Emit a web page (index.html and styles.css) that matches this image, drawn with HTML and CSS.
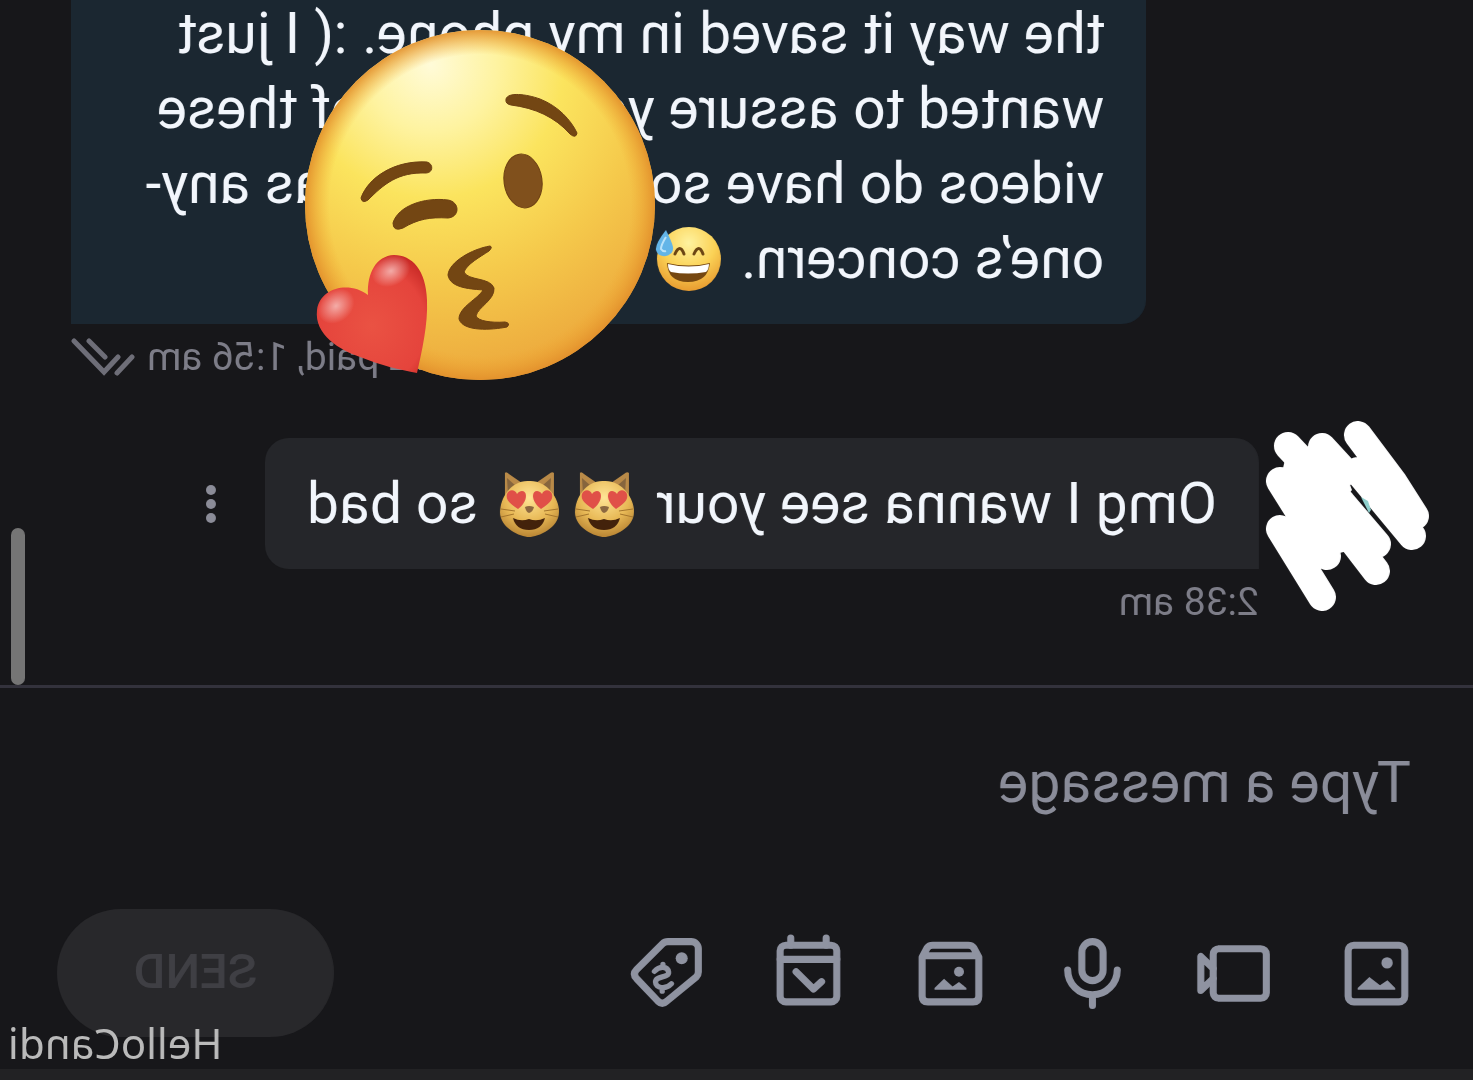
FILE: index.html
```html
<!DOCTYPE html>
<html lang="en">

<head>
  <meta charset="UTF-8" />
  <meta name="viewport" content="width=device-width, initial-scale=1.0" />
  <title>Messages</title>
  <link rel="stylesheet" href="styles.css">
</head>

<body>
  <!-- the whole chat is flipped left to right, see .mirror -->
  <div class="chat mirror">
    <main class="messages">
      <div class="message out">
        <div class="bubble">the way it saved in my phone. :( I just<br>
          wanted to assure you that all of these<br>
          videos do have sound, if that was any-<br>
          one’s concern. <svg class="emoji" viewBox="0 0 75 68" role="img" aria-label="sweat smile">
            <defs>
              <radialGradient id="smile" cx="50%" cy="25%" r="75%">
                <stop offset="0" stop-color="#fff3a0" />
                <stop offset=".55" stop-color="#fbd256" />
                <stop offset="1" stop-color="#e89c30" />
              </radialGradient>
            </defs>
            <circle cx="38" cy="34" r="32" fill="url(#smile)" />
            <path d="M24 29q4-11 9 0M43 29q4-11 9 0" fill="none" stroke="#6b4413" stroke-width="3" stroke-linecap="round" />
            <path d="M17 38q21 5 43 0q-1 19-21 19t-22-19z" fill="#754711" />
            <path d="M18 39q20 5 41 0q0 6-3 8q-17 3-35 0q-3-3-3-8z" fill="#fff" />
            <path d="M61 5q11 14 10 20q-2 7-10 6q-8-2-7-9q1-5 7-17z" fill="#63b5e8" />
            <path d="M61 12q5 8 5 12q-2 3-5 2" fill="none" stroke="#bce4fa" stroke-width="2" />
          </svg></div>
        <div class="meta">
          <span>$12 paid, 1:56 am</span>
          <svg class="checks" viewBox="0 0 64 40">
            <path d="M61 4L31 35L17 20M46 4L30 20M18 36L3 20" />
          </svg>
        </div>
      </div>

      <div class="message in">
        <div class="row">
          <div class="avatar">
            <svg viewBox="0 0 163 190">
              <g transform="matrix(-1 0 0 1 163 0)">
                <path class="scribble" d="M92 14L128 62L149 95M92 50L146 115M56 26L79 51M22 25L76 82L111 123M14 60L61 135M60 85L110 150M14 108L56 176" />
                <path d="M22 26H56L79 50L86 69L76 82L111 123L61 135L14 108L32 85L14 60zM92 50L110 35L149 95L146 115z" fill="#fff" />
                <path d="M95 76l7 4 3 9-2 3z" fill="#8fd0cd" />
              </g>
            </svg>
          </div>
          <div class="bubble">Omg I wanna see your <svg class="emoji" viewBox="0 0 75 68" role="img" aria-label="heart eyes cat">
              <defs>
                <radialGradient id="fur" cx="50%" cy="30%" r="70%">
                  <stop offset="0" stop-color="#ffe596" />
                  <stop offset=".6" stop-color="#e8b956" />
                  <stop offset="1" stop-color="#b98534" />
                </radialGradient>
                <g id="cat">
                  <path d="M13 30L13 3Q15 1 18 4L31 13Q38 10 45 13L58 4Q61 1 62 3L62 30z" fill="#b98a48" />
                  <path d="M16 8l9 8-8 8zM60 8l-9 8 8 8z" fill="#86653d" />
                  <path d="M38 11C56 10 67 28 67 42C67 58 47 67 38 67C29 67 8 58 8 42C8 28 20 10 38 11z" fill="url(#fur)" />
                  <path d="M9 39l14 2M9 47l13-3M66 39l-14 2M66 47l-13-3" stroke="#a5762d" stroke-width="1" />
                  <path d="M26 39C15 32 14 28 15 24C17 19 23 19 25 24C29 19 34 21 34 26C34 31 30 36 26 39zM49 39C60 32 61 28 60 24C58 19 52 19 50 24C46 19 41 21 41 26C41 31 45 36 49 39z" fill="#e05048" />
                  <path d="M33 37q5-2 9 0q-1 5-4 6q-4-1-5-6z" fill="#8c6840" />
                  <path d="M22 48q8 4 16 1q8 3 16-1q-3 12-16 12t-16-12z" fill="#43220b" />
                </g>
              </defs>
              <use href="#cat" />
            </svg><svg class="emoji" viewBox="0 0 75 68" role="img" aria-label="heart eyes cat">
              <use href="#cat" />
            </svg> so bad</div>
          <button class="more" type="button" aria-label="More">
            <svg viewBox="0 0 12 40">
              <circle cx="6" cy="6" r="5" />
              <circle cx="6" cy="20" r="5" />
              <circle cx="6" cy="34" r="5" />
            </svg>
          </button>
        </div>
        <div class="meta">2:38 am</div>
      </div>
      <div class="scrollbar"></div>
    </main>

    <form class="composer">
      <input class="text" type="text" placeholder="Type a message" aria-label="Type a message">
      <div class="toolbar">
        <div class="tools">
          <button type="button" aria-label="Photo">
            <svg class="icon" viewBox="0 0 24 24">
              <rect x="4" y="4" width="16" height="16" rx="1.6" />
              <g class="solid">
                <circle cx="9" cy="9" r="1.6" />
                <path d="M6.7 16.1L8.9 13.9L11 15.3L14 13L17.3 16.1V16.6H6.7z" />
              </g>
            </svg>
          </button>
          <button type="button" aria-label="Video">
            <svg class="icon" viewBox="0 0 24 24">
              <rect x="3" y="5" width="15" height="14" rx="1.6" />
              <path d="M18 10.6L21.5 7.2V16.8L18 13.4" />
            </svg>
          </button>
          <button type="button" aria-label="Voice">
            <svg class="icon" viewBox="0 0 24 24">
              <rect x="9" y="3" width="6" height="11" rx="3" />
              <path d="M5 11a7 7 0 0 0 14 0M12 18v3" />
            </svg>
          </button>
          <button type="button" aria-label="Vault">
            <svg class="icon" viewBox="0 0 24 24">
              <path d="M4 7.4L5.4 4.8Q5.9 4 7 4H17Q18.1 4 18.6 4.8L20 7.4V18.4Q20 20 18.4 20H5.6Q4 20 4 18.4zM4.5 7h15" />
              <g class="solid">
                <circle cx="9.6" cy="11.5" r="1.4" />
                <path d="M7.5 16.1L9.6 14.4L11.4 15.7L13.8 13.5L16.5 16.1V16.6H7.5z" />
              </g>
            </svg>
          </button>
          <button type="button" aria-label="Schedule">
            <svg class="icon" viewBox="0 0 24 24">
              <rect x="4" y="4" width="16" height="16" rx="1.6" />
              <path d="M4 8h16M7 2v2M17 2v2M15.5 11.5L10.6 16.4L8.3 14.3" />
            </svg>
          </button>
          <button type="button" aria-label="Price">
            <svg class="icon" viewBox="0 0 24 24">
              <path d="M5 3h6.6q.9 0 1.5.6l7.3 7.3q1.3 1.3 0 2.6l-6 6.3q-1.2 1.2-2.5 0L3.6 13q-.6-.6-.6-1.4V5a2 2 0 0 1 2-2z" />
              <circle class="solid" cx="7.7" cy="7.7" r="1.7" />
              <path class="thin" d="M15.4 11.4C14 9.8 11.6 9.9 11.4 11.6S15.1 12.6 15.1 14.4S12.2 16.6 10.6 14.9M13 9.4v.8M13.2 16v1" />
            </svg>
          </button>
        </div>
        <button class="send" type="submit" disabled>SEND</button>
      </div>
    </form>
    <div class="watermark">HelloCandi</div>
  </div>

  <!-- sticker over the chat -->
  <svg class="sticker" viewBox="0 0 360 360" role="img" aria-label="kiss">
    <defs>
      <radialGradient id="rim" cx="50%" cy="50%" r="50%">
        <stop offset=".86" stop-color="#f0a832" stop-opacity="0" />
        <stop offset="1" stop-color="#e28f2b" stop-opacity=".9" />
      </radialGradient>
      <radialGradient id="face" cx="36%" cy="10%" r="95%">
        <stop offset="0" stop-color="#fffbd8" />
        <stop offset=".2" stop-color="#fef3a0" />
        <stop offset=".4" stop-color="#fbe45e" />
        <stop offset=".65" stop-color="#f5c94b" />
        <stop offset="1" stop-color="#eba43b" />
      </radialGradient>
      <radialGradient id="heart" cx="50%" cy="60%" r="65%">
        <stop offset="0" stop-color="#ea5243" />
        <stop offset=".75" stop-color="#e5443c" />
        <stop offset="1" stop-color="#c92a26" />
      </radialGradient>
      <radialGradient id="shine">
        <stop offset="0" stop-color="#fff" stop-opacity=".55" />
        <stop offset="1" stop-color="#fff" stop-opacity="0" />
      </radialGradient>
    </defs>
    <circle cx="180" cy="180" r="175" fill="url(#face)" />
    <circle cx="180" cy="180" r="175" fill="url(#rim)" />
    <g fill="#734613" stroke="#6d4012" stroke-width="1" stroke-linejoin="round">
      <path d="M61 173C68 153 94 135 127 137C134 139 133 148 126 148C98 147 84 159 68 175Q62 179 61 173z" />
      <path d="M93 198C98 181 124 172 148 175C160 177 160 192 148 193C130 192 118 194 103 203Q93 207 93 198z" />
      <path d="M206 74C208 67 226 69 240 74C258 81 271 95 277 108Q276 114 270 109C255 92 235 83 211 80Q205 79 206 74z" />
      <ellipse cx="223" cy="156" rx="19" ry="27" transform="rotate(-8 223 156)" fill="#80501c" />
      <path d="M190 221C172 224 149 237 148 250C150 264 174 264 183 265C178 274 159 282 159 294C163 307 192 305 207 302Q211 298 205 297C191 298 178 296 176 291C178 282 195 275 194 263C190 252 168 256 164 247C167 239 180 232 189 226Q193 222 190 221z" />
    </g>
    <path d="M117 348C122 325 128 300 127 275C126 245 112 230 94 230C76 231 67 248 68 270C50 256 20 262 17 285C14 310 40 325 60 332C80 340 100 345 117 348z" fill="url(#heart)" />
    <ellipse cx="91" cy="246" rx="20" ry="15" fill="url(#shine)" transform="rotate(-25 91 246)" />
    <ellipse cx="36" cy="281" rx="20" ry="16" fill="url(#shine)" transform="rotate(-40 36 281)" />
  </svg>
</body>

</html>
```

FILE: styles.css
```css
* {
  box-sizing: border-box;
}

body {
  margin: 0;
  height: 100vh;
  position: relative;
  overflow: hidden;
  background-color: #17171a;
  font-family: Roboto, "Liberation Sans", sans-serif;
  font-size: 57px;
  line-height: 75px;
  color: #f2f6fc;
}

button,
input {
  font: inherit;
  color: inherit;
  background: none;
  border: 0;
  padding: 0;
}

svg {
  display: block;
}

.mirror {
  transform: scaleX(-1);
}

.chat {
  position: relative;
  height: 100%;
  display: flex;
  flex-direction: column;
  border-bottom: 11px solid #222224;
}

/* messages */

.messages {
  position: relative;
  flex: 1;
  min-height: 0;
  display: flex;
  flex-direction: column;
  justify-content: flex-end;
  gap: 48px;
  padding-bottom: 50px;
  overflow: hidden;
}

.bubble {
  padding: 28px 42px;
}

.emoji {
  display: inline-block;
  width: 75px;
  height: 68px;
  vertical-align: -15px;
}

.meta {
  font-size: 39px;
  line-height: 66px;
  color: #7d7d88;
}

.out {
  width: 73%;
  margin-right: 71px;
  align-self: flex-end;
}

.out .bubble {
  background-color: #1b2731;
  border-radius: 24px 24px 0 24px;
  white-space: nowrap;
}

.out .meta {
  display: flex;
  justify-content: flex-end;
  align-items: center;
  gap: 12px;
}

.checks {
  width: 64px;
  height: 40px;
  fill: none;
  stroke: #6e6e78;
  stroke-width: 5;
  stroke-linecap: round;
}

.row {
  display: flex;
  align-items: center;
}

.avatar {
  position: relative;
  width: 163px;
  height: 131px;
  margin: 0 7px 0 44px;
}

.avatar svg {
  position: absolute;
  top: -17px;
  left: 0;
  width: 163px;
  height: 190px;
}

.scribble {
  fill: none;
  stroke: #fff;
  stroke-width: 28;
  stroke-linecap: round;
  stroke-linejoin: round;
}

.in .bubble {
  background-color: #25262a;
  border-radius: 24px 24px 24px 0;
}

.in .meta {
  margin-left: 214px;
}

.more {
  margin-left: 48px;
}

.more svg {
  width: 12px;
  height: 40px;
  fill: #8b8c98;
}

.scrollbar {
  position: absolute;
  right: 11px;
  bottom: 0;
  width: 14px;
  height: 157px;
  border-radius: 7px;
  background-color: #757575;
}

/* composer */

.composer {
  border-top: 3px solid #33323c;
  padding: 57px 57px 32px 54px;
}

.text {
  display: block;
  width: 100%;
  height: 75px;
  padding-left: 8px;
  outline: none;
}

.text::placeholder {
  color: #8a8c99;
  opacity: 1;
}

.toolbar {
  display: flex;
  justify-content: space-between;
  align-items: center;
  margin-top: 89px;
}

.tools {
  display: flex;
  gap: 57px;
}

.icon {
  width: 85px;
  height: 85px;
  fill: none;
  stroke: #8f93a1;
  stroke-width: 2;
  stroke-linecap: round;
  stroke-linejoin: round;
}

.icon .solid {
  fill: #8f93a1;
  stroke: none;
}

.icon .thin {
  stroke-width: 1.5;
}

.send {
  width: 277px;
  height: 128px;
  padding-bottom: 4px;
  border-radius: 64px;
  background-color: #28282b;
  color: #3f3f44;
  font-size: 49px;
  font-weight: 500;
}

.watermark {
  position: absolute;
  right: 8px;
  bottom: 0;
  font-family: "Noto Sans", sans-serif;
  font-size: 42px;
  line-height: 52px;
  color: #bababa;
}

.sticker {
  position: absolute;
  top: 25px;
  left: 300px;
  width: 360px;
  height: 360px;
}
```
